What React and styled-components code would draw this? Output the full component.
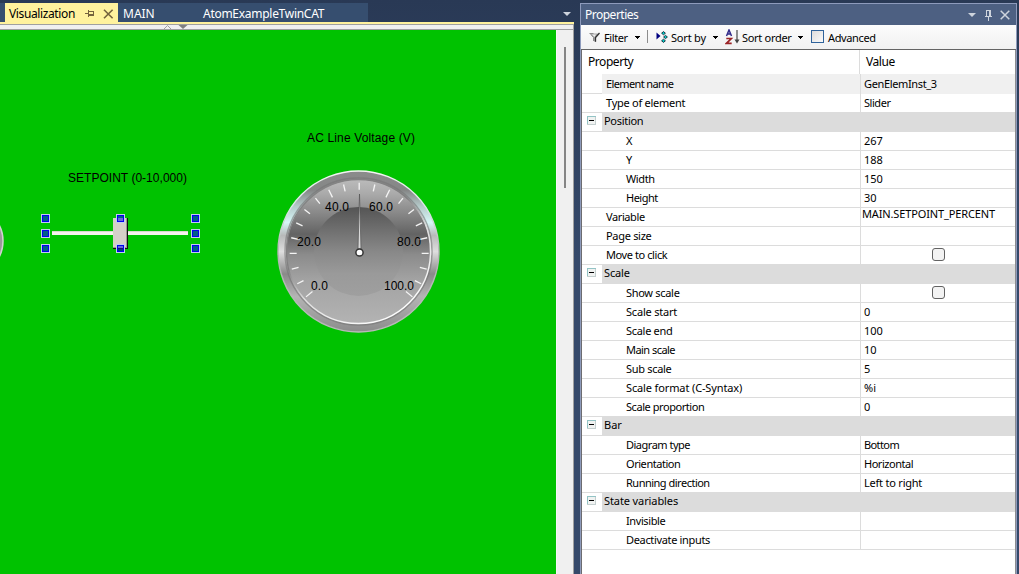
import React from "react";
import styled, { createGlobalStyle } from "styled-components";

const GlobalStyle = createGlobalStyle`
  * { box-sizing: border-box; }
  html, body { margin: 0; padding: 0; }
  body {
    overflow: hidden;
    background: #293955;
    font-family: "Noto Sans", "Open Sans", sans-serif;
  }
`;

const Shell = styled.div`
  display: flex;
  width: 1019px;
  height: 574px;
  padding-top: 3px;
  overflow: hidden;
  background: linear-gradient(#293955, #35496a 45%, #35496a);
`;

const Editor = styled.div`
  display: flex;
  flex-direction: column;
  flex: none;
  width: 574px;
`;

const TabBar = styled.div`
  display: flex;
  align-items: stretch;
  height: 21px;
  border-bottom: 2px solid #fff29d;
`;

const TabStub = styled.div`
  width: 5px;
  background: #364e6f;
`;

const Tab = styled.div`
  display: flex;
  align-items: center;
  flex: none;
  width: ${(p) => p.$width}px;
  padding: 2px 0 0 ${(p) => p.$pad}px;
  background: ${(p) => (p.$active ? "#fff29d" : "#364e6f")};
  color: ${(p) => (p.$active ? "#000" : "#fff")};
  font-size: 12px;
  line-height: 19px;
  letter-spacing: ${(p) => p.$spacing || 0}px;
  white-space: nowrap;
  svg { flex: none; }
  svg + svg { margin-left: 8px; }
`;

const TabTitle = styled.span`
  flex: none;
  width: 76px;
`;

const TabMenu = styled.div`
  display: flex;
  flex: 1;
  justify-content: flex-end;
  padding: 9px 3px 0 0;
`;

const Ruler = styled.div`
  height: 6px;
  flex: none;
  border: 1px solid #a0a0a0;
  border-left: 0;
  background: #f0f0f0;
  svg { display: block; margin-left: 163px; }
`;

const Workspace = styled.div`
  display: flex;
  flex: 1;
  min-height: 0;
`;

const Canvas = styled.div`
  position: relative;
  width: 556px;
  overflow: hidden;
  background: #00c200;
`;

const ScrollTrack = styled.div`
  width: 18px;
  padding: 17px 0 0 7px;
  background: #f0f0f0;
  border-left: 1px solid #f7f7f7;
  border-right: 1px solid #a0a0a0;
`;

const ScrollThumb = styled.div`
  width: 2px;
  height: 141px;
  background: #858585;
`;

const CanvasDrawing = styled.svg`
  position: absolute;
  left: 0;
  top: 0;
  font-family: "Liberation Sans", Arial, sans-serif;
  font-size: 12px;
`;

const Panel = styled.div`
  display: flex;
  flex-direction: column;
  width: 437px;
  margin-left: 6px;
  border: 1px solid #8e9bbc;
  border-bottom: 0;
  background: #fff;
`;

const PanelTitle = styled.div`
  display: flex;
  align-items: center;
  flex: none;
  height: 21px;
  padding: 0 6px 0 4px;
  background: #4d6082;
  color: #fff;
  font-size: 12px;
  letter-spacing: -0.5px;
  span { flex: 1; }
  svg + svg { margin-left: 8px; }
  svg + svg + svg { margin-left: 7px; }
`;

const Toolbar = styled.div`
  display: flex;
  align-items: center;
  flex: none;
  height: 25px;
  padding-left: 8px;
  border-bottom: 1px solid #646464;
  background: linear-gradient(#fcfcfc, #f1f1f1);
  font-size: 11px;
  svg { flex: none; }
`;

const ToolLabel = styled.span`
  width: ${(p) => p.$width}px;
  margin-left: ${(p) => p.$gap}px;
  padding-top: 1px;
  white-space: nowrap;
  letter-spacing: ${(p) => p.$spacing}px;
`;

const ToolDivider = styled.i`
  width: 1px;
  height: 13px;
  margin: -2px 8px 0 7px;
  background: #8c8c8c;
`;

const ToolGap = styled.i`
  width: 7px;
`;

const AdvancedBox = styled.i`
  width: 13px;
  height: 13px;
  margin: -1px 0 0 8px;
  border: 1px solid #2f639b;
  background: linear-gradient(135deg, #dcdcdc, #fafafa);
`;

const Grid = styled.div`
  flex: 1;
  border-left: 1px solid #6c6c70;
  border-right: 1px solid #8c8c90;
  background: #fff;
`;

const GridHead = styled.div`
  display: grid;
  grid-template-columns: 277px 1fr;
  height: 24px;
  line-height: 24px;
  font-size: 12px;
  letter-spacing: -0.45px;
  span { padding-left: 6px; }
  span + span { border-left: 1px solid #dcdcdc; }
`;

const Row = styled.div`
  display: grid;
  grid-template-columns: 20px 258px 1fr;
  height: ${(p) => (p.$first ? 20 : 19)}px;
  border-bottom: 1px solid #dcdcdc;
  line-height: ${(p) => (p.$first ? 20 : 18)}px;
  font-size: 11px;
`;

const NameCell = styled.div`
  padding-left: ${(p) => (p.$deep ? 24 : 4)}px;
  background: ${(p) => (p.$first ? "#f0f0f0" : "transparent")};
  letter-spacing: ${(p) => p.$spacing}px;
  white-space: nowrap;
`;

const ValueCell = styled.div`
  padding-left: ${(p) => (p.$edit ? 1 : 3)}px;
  border-left: 1px solid #dcdcdc;
  background: ${(p) => (p.$first ? "#f0f0f0" : "transparent")};
  letter-spacing: ${(p) => p.$spacing}px;
  line-height: ${(p) => (p.$edit ? "12px" : "inherit")};
  white-space: nowrap;
`;

const CheckCell = styled(ValueCell)`
  display: flex;
  justify-content: center;
  align-items: flex-start;
  padding: 2px 0 0;
`;

const CheckBox = styled.i`
  width: 13px;
  height: 13px;
  border: 1px solid #626262;
  border-radius: 3px;
  background: #f3f3f3;
`;

const GroupRow = styled.div`
  display: grid;
  grid-template-columns: 20px 1fr;
  height: 20px;
  margin-top: -1px;
  font-size: 11px;
  line-height: 18px;
`;

const GroupToggle = styled.div`
  padding: 3px 0 0 5px;
  border-top: 1px solid #dcdcdc;
  border-bottom: 1px solid #dcdcdc;
  svg { display: block; }
`;

const GroupName = styled.div`
  padding-left: 2px;
  background: #dcdcdc;
  letter-spacing: ${(p) => p.$spacing}px;
`;

const SVG = ({ w, h, children, ...rest }) => (
  <svg width={w} height={h} viewBox={`0 0 ${w} ${h}`} {...rest}>{children}</svg>
);

const Caret = () => (
  <SVG w={5} h={3} shapeRendering="crispEdges"><path d="M0 0h5v1h-1v1h-1v1h-1v-1h-1v-1h-1z" fill="#000" /></SVG>
);

const PushPinSide = () => (
  <SVG w={10} h={9} shapeRendering="crispEdges">
    <path d="M0 4.5h3M3.5 1v7M3 2.5h5.5v4H3M4 5.5h4" fill="none" stroke="#75633d" />
  </SVG>
);

const Cross = ({ color }) => (
  <SVG w={11} h={10}><path d="M1 .7l8.6 8.6M9.6 .7L1 9.3" stroke={color} strokeWidth="1.6" /></SVG>
);

const Minus = () => (
  <SVG w={9} h={9}>
    <rect x=".5" y=".5" width="8" height="8" fill="#f0f2f1" stroke="#c4cfcf" />
    <path d="M0 .5h9M.5 0v8" stroke="#92c3c5" />
    <path d="M2 4.5h5" stroke="#000" />
  </SVG>
);

const FilterIcon = () => (
  <SVG w={12} h={11}>
    <path d="M.5 1.500h10L7 5.500V10l-2.500-1V5.500z" fill="#a8a8a8" />
    <path d="M.5 1.500h4M2 2.500l2.500 3V9" fill="none" stroke="#8c8c8c" />
    <path d="M3 2.500h4L5.500 5z" fill="#eee" />
    <path d="M6.500 9.800V5.500L10.500 1" fill="none" stroke="#333" strokeWidth="1.3" />
  </SVG>
);

const SortByIcon = () => (
  <SVG w={12} h={12}>
    <path d="M.5 1.5v7l4-3.5z" fill="#000080" />
    <g fill="#00d5cc" stroke="#123" strokeWidth=".9">
      <path d="M7.5 .6l1.9 1.6-1.9 1.6-1.9-1.6zM9.5 4.4l1.9 1.6-1.9 1.6-1.9-1.6zM7.5 8.2l1.9 1.6-1.9 1.6-1.9-1.6z" />
    </g>
  </SVG>
);

const SortOrderIcon = () => (
  <SVG w={15} h={16}>
    <g fill="none" strokeWidth="1.5">
      <path d="M1.500 7L4 1 6.500 7M2.300 5h3.500" stroke="#322b8a" />
      <path d="M1.300 9.5h5L1.500 14.3h5.2" stroke="#9b2427" strokeWidth="1.7" />
    </g>
    <path d="M12 1v12" stroke="#555" strokeWidth="1.3" />
    <path d="M9.5 10.500h5L12 14.5z" fill="#444" />
  </SVG>
);

const CX = 358.5;
const CY = 221.5;

const ticks = Array.from({ length: 21 }, (_, i) => {
  const a = ((-130 + i * 13) * Math.PI) / 180;
  const major = i % 4 === 0;
  const r1 = major ? 61 : 62.5;
  const r2 = 69.5;
  return {
    x1: CX + 0.7 + r1 * Math.sin(a),
    y1: CY + 0.7 - r1 * Math.cos(a),
    x2: CX + 0.7 + r2 * Math.sin(a),
    y2: CY + 0.7 - r2 * Math.cos(a),
  };
});

const gaugeNumbers = [
  ["0.0", 311, 260, 17],
  ["20.0", 297, 216, 24],
  ["40.0", 325, 181, 24],
  ["60.0", 369, 181, 24],
  ["80.0", 397, 216, 24],
  ["100.0", 384, 260, 30],
];

const Gauge = () => (
  <g>
    <defs>
      <linearGradient id="rim" x1="0" y1="0" x2="0" y2="1">
        <stop offset="0" stopColor="#8b8b8b" />
        <stop offset=".12" stopColor="#858787" />
        <stop offset=".22" stopColor="#b5caca" />
        <stop offset=".32" stopColor="#d6f6f6" />
        <stop offset=".4" stopColor="#b8baba" />
        <stop offset=".5" stopColor="#dedede" />
        <stop offset=".64" stopColor="#8a8a8a" />
        <stop offset=".78" stopColor="#b4b4b4" />
        <stop offset="1" stopColor="#8c8c8c" />
      </linearGradient>
      <linearGradient id="rimEdge" x1="0" y1="0" x2="0" y2="1">
        <stop offset="0" stopColor="#f4f4f4" />
        <stop offset=".25" stopColor="#d8e4e4" />
        <stop offset=".5" stopColor="#b4b4b4" />
        <stop offset="1" stopColor="#b9b9b9" />
      </linearGradient>
      <linearGradient id="face" x1="0" y1="0" x2="0" y2="1">
        <stop offset="0" stopColor="#bbbbbb" />
        <stop offset=".1" stopColor="#aaaaaa" />
        <stop offset=".38" stopColor="#636363" />
        <stop offset=".52" stopColor="#8b8b8b" />
        <stop offset=".7" stopColor="#a3a3a3" />
        <stop offset="1" stopColor="#b3b3b3" />
      </linearGradient>
      <linearGradient id="hub" x1="0" y1="0" x2="0" y2="1">
        <stop offset="0" stopColor="#555" />
        <stop offset=".5" stopColor="#888" />
        <stop offset=".75" stopColor="#9a9a9a" />
        <stop offset="1" stopColor="#9f9f9f" />
      </linearGradient>
      <linearGradient id="lip" x1="0.1" y1="0" x2=".7" y2="1">
        <stop offset="0" stopColor="#858585" />
        <stop offset=".42" stopColor="#808080" />
        <stop offset=".62" stopColor="#ddd" />
        <stop offset="1" stopColor="#fff" />
      </linearGradient>
    </defs>
    <circle cx={CX} cy={CY} r="80.5" fill="url(#rim)" stroke="url(#rimEdge)" strokeWidth="1.4" />
    <circle cx={CX} cy={CY} r="73.5" fill="none" stroke="#777" strokeOpacity=".6" strokeWidth="1.5" />
    <circle cx={CX} cy={CY} r="72" fill="url(#face)" stroke="url(#lip)" strokeWidth="1.4" />
    <circle cx={CX} cy={CY} r="44.5" fill="url(#hub)" />
    {ticks.map((t, i) => (
      <line key={i} {...t} stroke="#f4f4f4" strokeWidth="1.3" />
    ))}
    {gaugeNumbers.map(([label, x, y, w]) => (
      <text key={label} x={x} y={y} textLength={w}>{label}</text>
    ))}
    <path d="M359.5 164L358 219h3z" fill="#d8d8d8" stroke="#555" strokeWidth=".7" />
    <circle cx="359.5" cy="222.5" r="3.6" fill="#fff" stroke="#333" strokeWidth="1.5" />
  </g>
);

const handles = [
  [45, 188], [120, 188], [195, 188],
  [45, 203], [195, 203],
  [45, 218], [120, 218], [195, 218],
];

const Slider = () => (
  <g shapeRendering="crispEdges">
    <rect x="52" y="201" width="136" height="4" fill="#f5f2ec" />
    <rect x="52" y="201" width="136" height="1" fill="#d8d8cc" />
    <rect x="113" y="188" width="15" height="31" fill="#111" />
    <rect x="113" y="188" width="14" height="30" fill="#9a9792" />
    <rect x="113" y="188" width="13" height="29" fill="#d4d0c8" />
    {handles.map(([x, y]) => (
      <g key={`${x}-${y}`}>
        <rect x={x - 4} y={y - 4} width="9" height="9" fill="#bfcfee" />
        <rect x={x - 3} y={y - 3} width="7" height="7" fill="#0000f0" />
        <rect x={x - 2} y={y - 2} width="5" height="5" fill={x === 120 ? "#6668dc" : "#005f88"} />
      </g>
    ))}
    <rect x="118" y="186" width="5" height="2" fill="#005f88" />
    <rect x="118" y="218" width="5" height="3" fill="#003c78" />
    <rect x="118" y="218" width="5" height="1" fill="#111166" />
  </g>
);

const PropertyRow = ({ name, value, deep, first, edit, check, ns = 0, vs = 0 }) => (
  <Row $first={first}>
    <div />
    <NameCell $deep={deep} $first={first} $spacing={ns}>{name}</NameCell>
    {check ? (
      <CheckCell><CheckBox /></CheckCell>
    ) : (
      <ValueCell $first={first} $edit={edit} $spacing={vs}>{value}</ValueCell>
    )}
  </Row>
);

const Group = ({ name, spacing = 0 }) => (
  <GroupRow>
    <GroupToggle><Minus /></GroupToggle>
    <GroupName $spacing={spacing}>{name}</GroupName>
  </GroupRow>
);

export default function App() {
  return (
    <>
      <GlobalStyle />
      <Shell>
        <Editor>
          <TabBar>
            <TabStub />
            <Tab $active $width={113} $pad={4} $spacing={-0.38}>
              <TabTitle>Visualization</TabTitle>
              <PushPinSide />
              <Cross color="#75633d" />
            </Tab>
            <Tab $width={80} $pad={5}>MAIN</Tab>
            <Tab $width={170} $pad={5} $spacing={-0.28}>AtomExampleTwinCAT</Tab>
            <TabMenu>
              <SVG w={8} h={4}><path d="M0 0h8L4 4z" fill="#ced4dd" /></SVG>
            </TabMenu>
          </TabBar>
          <Ruler>
            <SVG w={26} h={4}>
              <path d="M1 4l3.5-3.5L8 4" fill="none" stroke="#a0a0a0" />
              <path d="M15.500 0h9L20 4z" fill="#808080" />
            </SVG>
          </Ruler>
          <Workspace>
            <Canvas>
              <CanvasDrawing width="556" height="544" viewBox="0 0 556 544">
                <text x="307" y="112" textLength="108">AC Line Voltage (V)</text>
                <text x="68" y="152" textLength="119">SETPOINT (0-10,000)</text>
                <circle cx="-31" cy="211" r="34" fill="#999" stroke="#d0d0d0" strokeWidth="1.5" />
                <Slider />
                <Gauge />
              </CanvasDrawing>
            </Canvas>
            <ScrollTrack><ScrollThumb /></ScrollTrack>
          </Workspace>
        </Editor>
        <Panel>
          <PanelTitle>
            <span>Properties</span>
            <SVG w={8} h={4}><path d="M0 0h8L4 4z" fill="#ced4dd" /></SVG>
            <SVG w={9} h={12} shapeRendering="crispEdges">
              <path d="M2.500 7V1.500h4V7M5.500 2v5M1 7.500h7M4.500 8v4" fill="none" stroke="#ced4dd" />
            </SVG>
            <SVG w={10} h={10}>
              <path d="M.7 .7l8.600 8.600M9.300 .7L.7 9.300" stroke="#ced4dd" strokeWidth="1.5" />
            </SVG>
          </PanelTitle>
          <Toolbar>
            <FilterIcon />
            <ToolLabel $gap={3} $width={31} $spacing={-0.4}>Filter</ToolLabel>
            <Caret />
            <ToolDivider />
            <SortByIcon />
            <ToolLabel $gap={3} $width={42} $spacing={-0.2}>Sort by</ToolLabel>
            <Caret />
            <ToolGap />
            <SortOrderIcon />
            <ToolLabel $gap={2} $width={56} $spacing={-0.3}>Sort order</ToolLabel>
            <Caret />
            <AdvancedBox />
            <ToolLabel $gap={4} $width={50} $spacing={-0.36}>Advanced</ToolLabel>
          </Toolbar>
          <Grid>
            <GridHead><span>Property</span><span>Value</span></GridHead>
            <PropertyRow first name="Element name" ns={-0.62} value="GenElemInst_3" vs={-0.36} />
            <PropertyRow name="Type of element" ns={-0.26} value="Slider" vs={-0.45} />
            <Group name="Position" spacing={-0.3} />
            <PropertyRow deep name="X" value="267" />
            <PropertyRow deep name="Y" value="188" />
            <PropertyRow deep name="Width" ns={-0.4} value="150" />
            <PropertyRow deep name="Height" ns={-0.5} value="30" />
            <PropertyRow name="Variable" ns={-0.4} value="MAIN.SETPOINT_PERCENT" vs={-0.14} edit />
            <PropertyRow name="Page size" ns={-0.3} />
            <PropertyRow name="Move to click" ns={-0.42} check />
            <Group name="Scale" spacing={-0.15} />
            <PropertyRow deep name="Show scale" ns={-0.3} check />
            <PropertyRow deep name="Scale start" ns={-0.2} value="0" />
            <PropertyRow deep name="Scale end" ns={-0.3} value="100" />
            <PropertyRow deep name="Main scale" ns={-0.54} value="10" />
            <PropertyRow deep name="Sub scale" ns={-0.3} value="5" />
            <PropertyRow deep name="Scale format (C-Syntax)" ns={-0.13} value="%i" />
            <PropertyRow deep name="Scale proportion" ns={-0.44} value="0" />
            <Group name="Bar" />
            <PropertyRow deep name="Diagram type" ns={-0.5} value="Bottom" vs={-0.6} />
            <PropertyRow deep name="Orientation" ns={-0.45} value="Horizontal" vs={-0.48} />
            <PropertyRow deep name="Running direction" ns={-0.5} value="Left to right" vs={-0.22} />
            <Group name="State variables" spacing={-0.1} />
            <PropertyRow deep name="Invisible" ns={-0.4} />
            <PropertyRow deep name="Deactivate inputs" ns={-0.34} />
          </Grid>
        </Panel>
      </Shell>
    </>
  );
}
